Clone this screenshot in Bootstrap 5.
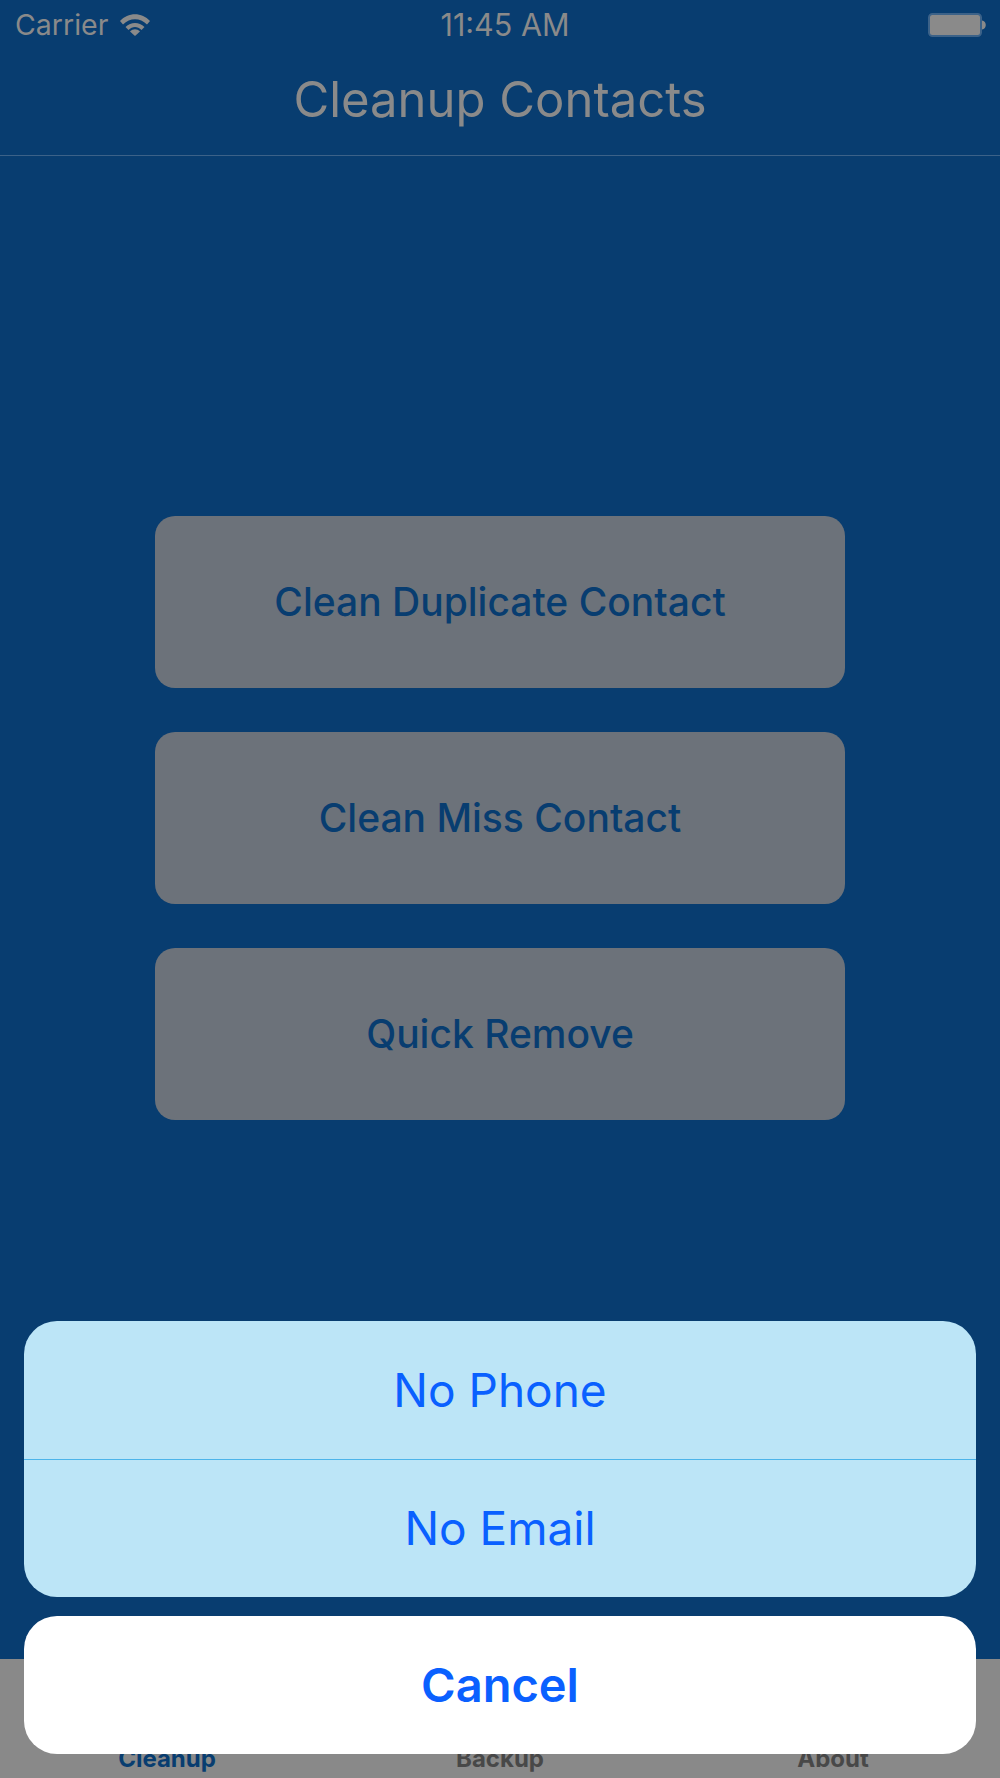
<!DOCTYPE html>
<html lang="en">

<head>
  <meta charset="UTF-8">
  <meta name="viewport" content="width=device-width, initial-scale=1.0">
  <title>Cleanup Contacts</title>
  <link rel="stylesheet" href="https://cdn.jsdelivr.net/npm/bootstrap@5.3.0/dist/css/bootstrap.min.css">
  <style>
    body {
      background-color: #083d70;
      font-family: 'Inter', 'Liberation Sans', sans-serif;
    }

    .phone {
      width: 1000px;
      height: 1778px;
      background-color: #083d70;
    }

    .status-bar {
      height: 50px;
      padding: 0 13px 0 15px;
      color: #8a8a8a;
      font-size: 28.500px;
    }

    .status-side {
      width: 200px;
      gap: 12px;
    }

    .status-time {
      margin-left: 8px;
      font-size: 30.500px;
    }

    .title-bar {
      height: 106px;
      padding-bottom: 5px;
      border-bottom: 1px solid #3c6288;
      color: #8a8a8a;
      font-size: 49px;
    }

    .main-area {
      padding-top: 360px;
      gap: 44px;
    }

    .clean-btn {
      width: 690px;
      height: 172px;
      padding: 0;
      border: 0;
      border-radius: 20px;
      background-color: #6c727a;
      color: #083d70;
      font-size: 39px;
      font-weight: 500;
    }

    .tab-area {
      height: 119px;
      padding-bottom: 1px;
      background-color: #898989;
      color: #484848;
      font-size: 24px;
      font-weight: 700;
    }

    .tab-cell {
      width: 333px;
    }

    .tab-active {
      color: #083d70;
    }

    .action-sheet {
      left: 24px;
      right: 24px;
      bottom: 24px;
      gap: 19px;
    }

    .sheet-group {
      border-radius: 33px;
      overflow: hidden;
      background-color: #bce5f7;
    }

    .sheet-row {
      height: 138px;
      font-size: 46px;
      color: #0a60ff;
    }

    .sheet-row + .sheet-row {
      border-top: 1px solid #4cb4ea;
    }

    .sheet-cancel {
      height: 138px;
      border-radius: 33px;
      background-color: #fff;
      color: #0a60ff;
      font-size: 47px;
      font-weight: 600;
    }
  </style>
</head>

<body class="m-0">
  <div class="phone position-relative d-flex flex-column overflow-hidden">
    <div class="status-bar d-flex align-items-center justify-content-between">
      <div class="status-side d-flex align-items-center">
        <span>Carrier</span>
        <svg width="30" height="22" viewBox="0 0 30 22">
          <path d="M0 7C8 -2 22 -2 30 7L27 10.500C20 3.500 10 3.500 3 10.500Z" fill="#8a8a8a"/>
          <path d="M5.500 13C11 7.500 19 7.500 24.500 13L21.500 16C17.500 12 12.500 12 8.500 16Z" fill="#8a8a8a"/>
          <path d="M10 17.500C13 14.500 17 14.500 20 17.500L15 22Z" fill="#8a8a8a"/>
        </svg>
      </div>
      <span class="status-time">11:45 AM</span>
      <div class="status-side d-flex justify-content-end">
        <svg width="59" height="24" viewBox="0 0 59 24">
          <rect x="1" y="1" width="52" height="22" rx="3.500" fill="#8a8a8a" stroke="#3c6288" stroke-width="2"/>
          <path d="M54 7.500C59 8 59 16 54 16.500Z" fill="#8a8a8a"/>
        </svg>
      </div>
    </div>
    <div class="title-bar d-flex align-items-center justify-content-center">Cleanup Contacts</div>
    <div class="main-area flex-grow-1 d-flex flex-column align-items-center">
      <button type="button" class="clean-btn">Clean Duplicate Contact</button>
      <button type="button" class="clean-btn">Clean Miss Contact</button>
      <button type="button" class="clean-btn">Quick Remove</button>
    </div>
    <div class="tab-area d-flex justify-content-center align-items-end">
      <div class="tab-cell text-center tab-active">Cleanup</div>
      <div class="tab-cell text-center">Backup</div>
      <div class="tab-cell text-center">About</div>
    </div>

    <div class="action-sheet position-absolute d-flex flex-column">
      <div class="sheet-group">
        <div class="sheet-row d-flex align-items-center justify-content-center">No Phone</div>
        <div class="sheet-row d-flex align-items-center justify-content-center">No Email</div>
      </div>
      <div class="sheet-cancel d-flex align-items-center justify-content-center">Cancel</div>
    </div>
  </div>

  <script src="https://cdn.jsdelivr.net/npm/bootstrap@5.3.0/dist/js/bootstrap.bundle.min.js"></script>
</body>

</html>
